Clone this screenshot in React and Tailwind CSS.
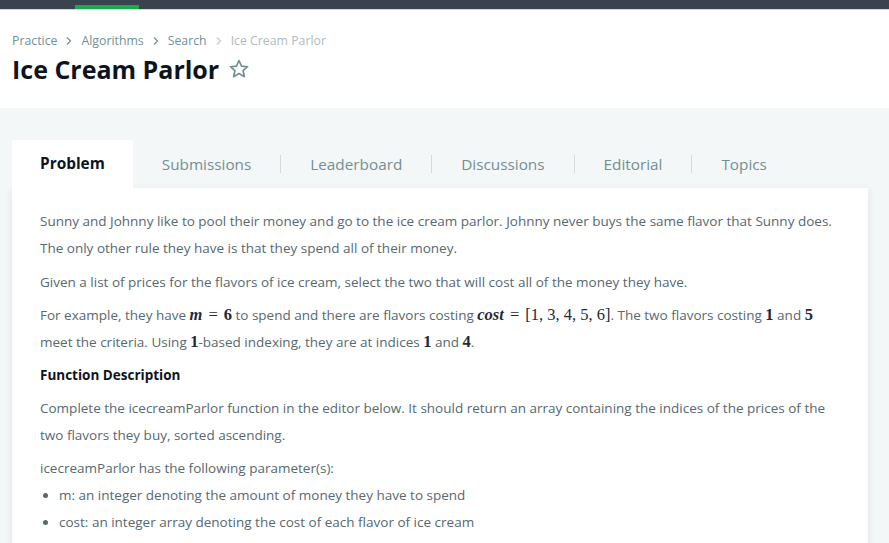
import React from "react";

const tabs = ["Submissions", "Leaderboard", "Discussions", "Editorial", "Topics"];

const M = ({ children, italic, bold }) => (
  <span
    className={`font-['Liberation_Serif',serif] text-[16.5px] leading-[20px] text-[#1f2937] ${bold ? "font-bold" : ""} ${italic ? "italic" : ""}`}
  >
    {children}
  </span>
);

const Eq = () => (
  <span className="inline-block mx-[6px] font-['Liberation_Serif',serif] text-[16.5px] leading-[20px] text-[#1f2937]">=</span>
);

const Star = () => (
  <svg width="22" height="22" viewBox="0 0 24 24" fill="none" stroke="#738f93" strokeWidth="1.8" strokeLinejoin="round">
    <path d="M12 2.8l2.8 6.1 6.6.6-5 4.4 1.5 6.5L12 17l-5.9 3.4 1.5-6.5-5-4.4 6.6-.6z" />
  </svg>
);

const Chevron = () => (
  <svg width="10" height="10" viewBox="0 0 10 10" fill="none" stroke="currentColor" strokeWidth="1.2">
    <path d="M3 1.5l3.5 3.5L3 8.5" />
  </svg>
);

export default function App() {
  return (
    <div className="h-[543px] overflow-hidden bg-[#f3f7f7] font-['Open_Sans',sans-serif]">
      {/* top nav strip */}
      <div className="h-[10px] bg-[#39424e] border-b border-[#d0d5d8] flex">
        <div className="ml-[75px] mt-[5px] h-[4px] w-[64px] bg-[#1ba94c]" />
      </div>

      {/* header */}
      <div className="bg-white h-[98px] px-3 pt-[22px]">
        <div className="flex items-center gap-[7px] text-[12.3px] text-[#738f93]">
          <span>Practice</span>
          <Chevron />
          <span>Algorithms</span>
          <Chevron />
          <span>Search</span>
          <span className="text-[#c2ccce]">
            <Chevron />
          </span>
          <span className="text-[#b0bbbd]">Ice Cream Parlor</span>
        </div>
        <div className="flex items-center gap-[9px] mt-[2px]">
          <h1 className="text-[25px] font-bold text-[#0e141e] leading-[34px]">Ice Cream Parlor</h1>
          <Star />
        </div>
      </div>

      {/* tabs + card */}
      <div className="pl-3 pr-[21px] pt-[31px]">
        <div className="flex items-center h-[49px] pt-[1px]">
          <div className="h-full bg-white px-[28px] flex items-center text-[15.4px] font-bold text-[#0e141e] rounded-t-[2px]">
            Problem
          </div>
          {tabs.map((t, i) => (
            <div key={t} className="flex items-center">
              {i > 0 && <div className="w-px h-[18px] bg-[#d3dadb]" />}
              <div className="px-[29px] text-[15.3px] text-[#738f93]">{t}</div>
            </div>
          ))}
        </div>

        <div className="bg-white shadow-[0_2px_8px_rgba(0,0,0,0.08)] px-[28px] pt-[20px] text-[13.5px] leading-[27px] text-[#576871] h-[400px]">
          <p>
            Sunny and Johnny like to pool their money and go to the ice cream parlor. Johnny never buys the same
            flavor that Sunny does. The only other rule they have is that they spend all of their money.
          </p>
          <p className="mt-[7px]">
            Given a list of prices for the flavors of ice cream, select the two that will cost all of the money they
            have.
          </p>
          <p className="mt-[6px]">
            For example, they have <M italic bold>m</M>
            <Eq />
            <M bold>6</M> to spend and there are flavors costing <M italic bold>cost</M>
            <Eq />
            <M>[1, 3, 4, 5, 6]</M>. The two flavors costing <M bold>1</M> and <M bold>5</M> meet the criteria. Using{" "}
            <M bold>1</M>-based indexing, they are at indices <M bold>1</M> and <M bold>4</M>.
          </p>
          <h3 className="mt-[6px] font-bold text-[#0e141e]">Function Description</h3>
          <p className="mt-[6px]">
            Complete the icecreamParlor function in the editor below. It should return an array containing the
            indices of the prices of the two flavors they buy, sorted ascending.
          </p>
          <p className="mt-[6px]">icecreamParlor has the following parameter(s):</p>
          <ul className="list-disc pl-[19px]">
            <li>m: an integer denoting the amount of money they have to spend</li>
            <li>cost: an integer array denoting the cost of each flavor of ice cream</li>
          </ul>
        </div>
      </div>
    </div>
  );
}
